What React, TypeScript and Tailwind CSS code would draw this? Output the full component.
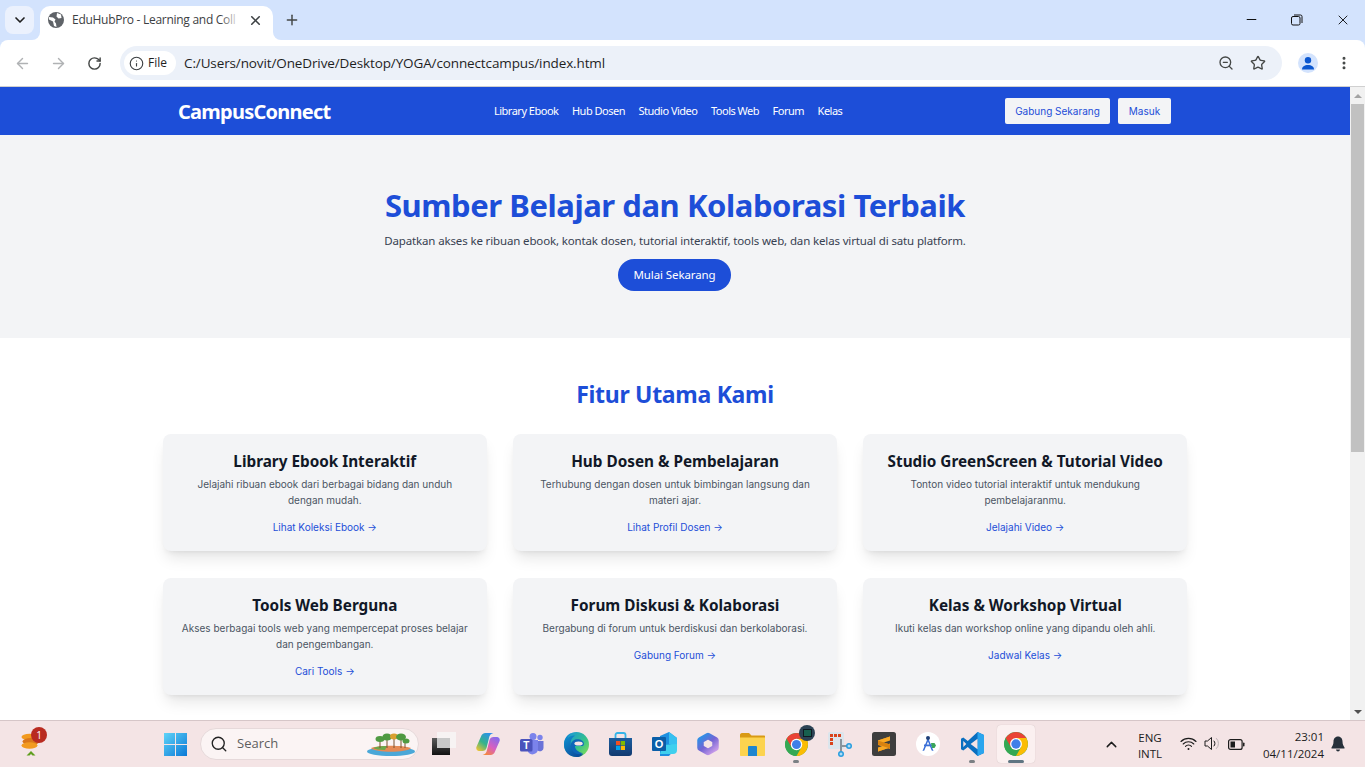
import React from "react";
import { ChevronDown, ArrowLeft, ArrowRight, RotateCw, Info, Star, Plus, X, Minus, ZoomOut, EllipsisVertical, Search, ChevronUp } from "lucide-react";

const cards = [
  { t: "Library Ebook Interaktif", d: ["Jelajahi ribuan ebook dari berbagai bidang dan unduh", "dengan mudah."], l: "Lihat Koleksi Ebook →" },
  { t: "Hub Dosen & Pembelajaran", d: ["Terhubung dengan dosen untuk bimbingan langsung dan", "materi ajar."], l: "Lihat Profil Dosen →" },
  { t: "Studio GreenScreen & Tutorial Video", d: ["Tonton video tutorial interaktif untuk mendukung", "pembelajaranmu."], l: "Jelajahi Video →" },
  { t: "Tools Web Berguna", d: ["Akses berbagai tools web yang mempercepat proses belajar", "dan pengembangan."], l: "Cari Tools →" },
  { t: "Forum Diskusi & Kolaborasi", d: ["Bergabung di forum untuk berdiskusi dan berkolaborasi."], l: "Gabung Forum →" },
  { t: "Kelas & Workshop Virtual", d: ["Ikuti kelas dan workshop online yang dipandu oleh ahli."], l: "Jadwal Kelas →" },
];
const nav = ["Library Ebook", "Hub Dosen", "Studio Video", "Tools Web", "Forum", "Kelas"];

const RED = "M43.05 13A22 22 0 0 0 4.95 13L14.47 29.5L24 13Z";
function Chrome({ s = 24 }: { s?: number }) {
  return (
    <svg width={s} height={s} viewBox="0 0 48 48">
      <circle cx="24" cy="24" r="22" fill="#34a853" />
      <path d={RED} fill="#34a853" transform="rotate(240 24 24)" />
      <path d={RED} fill="#fbbc04" transform="rotate(120 24 24)" />
      <path d={RED} fill="#ea4335" />
      <circle cx="24" cy="24" r="11" fill="#fff" />
      <circle cx="24" cy="24" r="8.7" fill="#3f7fe8" />
    </svg>
  );
}

function Slot({ children, dot }: { children: React.ReactNode; dot?: boolean }) {
  return (
    <div className="w-[44px] h-[46px] flex items-center justify-center relative">
      {children}
      {dot && <span className="absolute bottom-[4px] left-1/2 -translate-x-1/2 w-[6px] h-[3px] rounded-full bg-[#7b8084]" />}
    </div>
  );
}

function TaskIcons() {
  return (
    <div className="flex items-center">
      <Slot>
        <svg width="24" height="24" viewBox="0 0 24 24">
          <defs><linearGradient id="bk" x1="0" y1="0" x2="0" y2="1"><stop offset="0" stopColor="#5a5a5a" /><stop offset="1" stopColor="#111" /></linearGradient></defs>
          <rect x="5" y="0" width="19" height="16" fill="#f7f3f3" />
          <rect x="0" y="6" width="18" height="17" fill="url(#bk)" />
          <rect x="5" y="6" width="13" height="10" fill="#c8c8c8" />
        </svg>
      </Slot>
      <Slot>
        <svg width="24" height="24" viewBox="0 0 24 24">
          <defs>
            <linearGradient id="cp1" x1="0.1" y1="1" x2="0.8" y2="0"><stop offset="0" stopColor="#f4c430" /><stop offset=".45" stopColor="#36b38a" /><stop offset="1" stopColor="#2b8ff0" /></linearGradient>
            <linearGradient id="cp2" x1="0.9" y1="0" x2="0.2" y2="1"><stop offset="0" stopColor="#7c6cf0" /><stop offset=".55" stopColor="#d85fc0" /><stop offset="1" stopColor="#f5893a" /></linearGradient>
          </defs>
          <path d="M9.500 1h8c-3 .5-4 2.500-4.500 5l-2.500 10c-.6 2-2 3-4 3H3c-2 0-3.200-2-2.600-4L5 4.500C5.700 2.300 7.300 1 9.500 1z" fill="url(#cp1)" />
          <path d="M14.500 23h-8c3-.5 4-2.500 4.500-5l2.500-10c.6-2 2-3 4-3h3.500c2 0 3.200 2 2.600 4L19 19.500c-.7 2.200-2.300 3.500-4.500 3.500z" fill="url(#cp2)" />
        </svg>
      </Slot>
      <Slot>
        <svg width="24" height="23" viewBox="0 0 24 23">
          <circle cx="20" cy="4.500" r="2.700" fill="#7b83eb" /><circle cx="13" cy="3.500" r="3.500" fill="#7b83eb" />
          <path d="M16 8h7.500v7a3.500 3.500 0 0 1-5 3 6 6 0 0 1-2.500-2z" fill="#6a72d8" />
          <path d="M8 7h10v9a5.500 5.500 0 0 1-10 3z" fill="#7b83eb" />
          <rect x="0" y="6" width="12.500" height="12.500" rx="1.500" fill="#4b53bc" />
          <text x="6.250" y="15.800" textAnchor="middle" fontSize="10" fontWeight="700" fill="#fff" fontFamily="Liberation Sans">T</text>
        </svg>
      </Slot>
      <Slot>
        <svg width="25" height="25" viewBox="0 0 24 24">
          <defs>
            <linearGradient id="ed" x1="0.2" y1="0" x2="1" y2="0.8"><stop offset="0" stopColor="#1a9ad6" /><stop offset=".6" stopColor="#36c28a" /><stop offset="1" stopColor="#7ddc5a" /></linearGradient>
            <linearGradient id="ed2" x1="0" y1="0" x2="0.6" y2="1"><stop offset="0" stopColor="#0f9ad8" /><stop offset="1" stopColor="#0b4f9e" /></linearGradient>
          </defs>
          <circle cx="12" cy="12" r="12" fill="url(#ed)" />
          <path d="M0 12C0 5 5 0 12 0c-5 0-8 3-8.500 6 2-2 4.500-3 7-2.500C7.500 5 6 8 6.500 12c.5 5 5.500 9 12 9.500-2 1.500-4 2.500-6.500 2.500C5 24 0 19 0 12z" fill="url(#ed2)" />
          <path d="M6.500 12c.8-3.500 4-5.500 7.500-5 3 .4 5.500 2.500 5 5-.2 1-1 1.500-2.500 1.500h-6c0 3 3 6 8 7-1 .5-2 .8-3.500.8C10 21.500 6 17 6.500 12z" fill="#0d66b8" />
          <ellipse cx="14" cy="11" rx="4" ry="2" fill="#f4e3e4" />
        </svg>
      </Slot>
      <Slot>
        <svg width="23" height="24" viewBox="0 0 23 24">
          <defs><linearGradient id="st" x1="0" y1="0" x2="0" y2="1"><stop offset="0" stopColor="#1c5d9e" /><stop offset="1" stopColor="#123a70" /></linearGradient></defs>
          <path d="M6.500 6V3c0-1 .8-2 2-2h6c1.200 0 2 1 2 2v3" fill="none" stroke="#35b4e8" strokeWidth="1.800" />
          <path d="M0 6h23v15a3 3 0 0 1-3 3H3a3 3 0 0 1-3-3z" fill="url(#st)" />
          <rect x="7" y="9" width="4.200" height="4.200" fill="#f25022" /><rect x="11.800" y="9" width="4.200" height="4.200" fill="#7fba00" />
          <rect x="7" y="13.800" width="4.200" height="4.200" fill="#00a4ef" /><rect x="11.800" y="13.800" width="4.200" height="4.200" fill="#ffb900" />
        </svg>
      </Slot>
      <Slot>
        <svg width="25" height="24" viewBox="0 0 25 24">
          <path d="M8 4l9-4 8 6v9l-8 9H8z" fill="#1d8fe0" />
          <path d="M17 0l8 6v9l-8-3z" fill="#37c0f0" />
          <path d="M11 13l14-1v6a4 4 0 0 1-4 4H8z" fill="#3fd0ee" />
          <rect x="0" y="5" width="14" height="14" rx="1" fill="#0a5ea8" />
          <text x="7" y="16" textAnchor="middle" fontSize="11" fontWeight="700" fill="#fff" fontFamily="Liberation Sans">O</text>
        </svg>
      </Slot>
      <Slot>
        <svg width="22" height="24" viewBox="0 0 22 24">
          <defs><linearGradient id="m3" x1="0.1" y1="0" x2="0.9" y2="1"><stop offset="0" stopColor="#2f8fe6" /><stop offset=".5" stopColor="#7464d4" /><stop offset="1" stopColor="#c69ae8" /></linearGradient></defs>
          <path d="M11 4l7.500 4.300v7.400L11 20l-7.500-4.300V8.300z" fill="none" stroke="url(#m3)" strokeWidth="6.500" strokeLinejoin="round" />
        </svg>
      </Slot>
      <Slot>
        <svg width="25" height="23" viewBox="0 0 25 23">
          <path d="M0 2c0-1 .6-2 2-2h7l2.500 2.500H24c.6 0 1 .4 1 1V8H0z" fill="#d99a14" />
          <path d="M0 4.500h25V22c0 .6-.4 1-1 1H1c-.6 0-1-.4-1-1z" fill="#fcd34f" />
          <path d="M8 14a1 1 0 0 1 1-1h7a1 1 0 0 1 1 1v9H8z" fill="#1f86cf" />
        </svg>
      </Slot>
      <Slot dot>
        <Chrome s={25} />
        <span className="absolute top-[4px] left-[25px] w-[16px] h-[16px] rounded-full bg-[#2c4254] flex items-center justify-center">
          <span className="w-[9px] h-[8px] bg-[#17604f] border border-[#0e1a22] block" />
        </span>
      </Slot>
      <Slot>
        <svg width="25" height="25" viewBox="0 0 25 25">
          <rect x="0" y="0" width="16" height="17" rx="1.500" fill="#dbe5ec" />
          <g fill="#d9431c"><rect x="2" y="2" width="3" height="3" /><rect x="6" y="2" width="3" height="3" /><rect x="10" y="2" width="3" height="3" /><rect x="2" y="6" width="3" height="3" /><rect x="2" y="10" width="3" height="3" /></g>
          <path d="M13 7v14M13 14h8" stroke="#8a949c" strokeWidth="2" fill="none" />
          <circle cx="21" cy="14" r="3" fill="#2a9fe0" /><circle cx="13" cy="22" r="3" fill="#2a9fe0" />
          <path d="M19.500 14h3M13 20.500v3M21 12.500v3M11.500 22h3" stroke="#fff" strokeWidth="0.800" />
        </svg>
      </Slot>
      <Slot>
        <svg width="24" height="24" viewBox="0 0 24 24">
          <rect width="24" height="24" rx="2.500" fill="#3e3e3e" />
          <path d="M18 4.500L6 8.500V13l12 4V12.500L8.500 9.500 18 6.500zM6 16v3.500l12-4V12z" fill="#f59a1e" />
          <path d="M18 4.500v4L6 12.500v-4zM18 11.500v4l-12 4v-4z" fill="#f9a825" />
          <path d="M6 8.500v4l12 4v-4z" fill="#d9820f" />
        </svg>
      </Slot>
      <Slot>
        <svg width="24" height="24" viewBox="0 0 24 24">
          <circle cx="12" cy="12" r="12" fill="#fff" />
          <path d="M12 5.500L6.500 19l1.800-.6L12 9.500l3.700 8.900 1.800.6z" fill="#3a6fd8" />
          <circle cx="12" cy="6" r="2" fill="#1f3f78" />
          <rect x="8" y="12.500" width="8" height="1.800" fill="#3a6fd8" />
          <path d="M15 11h3.500l1.500 2.500-1.500 2.500H16z" fill="#3aa55a" />
        </svg>
      </Slot>
      <Slot dot>
        <svg width="24" height="24" viewBox="0 0 24 24">
          <path d="M17.500 0L24 3.100v17.800L17.500 24 7.800 15 3.300 18.400 1 17.200V6.800l2.300-1.200L7.800 9z" fill="#0a6fc0" />
          <path d="M17.500 0L24 3.100v17.800L17.500 24z" fill="#2aa5ee" />
          <path d="M17.500 6.700v10.600L10.600 12zM3.300 9v6L6.300 12z" fill="#f4e3e4" />
        </svg>
      </Slot>
      <div className="w-[38px] h-[38px] ml-[3px] flex justify-center items-center relative bg-[#fbf0f0] rounded-[4px] shadow-[0_0_1px_rgba(0,0,0,0.2)]">
        <Chrome s={26} />
        <span className="absolute bottom-0 left-1/2 -translate-x-1/2 w-[16px] h-[3px] rounded-full bg-[#5f7582]" />
      </div>
    </div>
  );
}

export default function App() {
  return (
    <div className="w-[1365px] h-[767px] overflow-hidden flex flex-col bg-white font-['Noto_Sans',sans-serif]">
      {/* tab strip */}
      <div className="h-[40px] bg-[#d3e3fd] flex items-start shrink-0">
        <div className="ml-[5px] mt-[6px] w-[29px] h-[28px] rounded-[8px] bg-[#ebf1fd] flex items-center justify-center">
          <ChevronDown size={16} strokeWidth={2.500} className="text-[#1f1f1f]" />
        </div>
        <div className="ml-[6px] mt-[6px] h-[34px] w-[233px] rounded-t-[10px] bg-white flex items-center pl-[7px] pb-[6px] relative">
          <span className="absolute -left-[8px] bottom-0 w-[8px] h-[8px] bg-white"><span className="block w-full h-full bg-[#d3e3fd] rounded-br-[8px]" /></span>
          <span className="absolute -right-[8px] bottom-0 w-[8px] h-[8px] bg-white"><span className="block w-full h-full bg-[#d3e3fd] rounded-bl-[8px]" /></span>
          <svg width="16" height="16" viewBox="0 0 16 16" className="ml-[1px] shrink-0">
            <circle cx="8" cy="8" r="8" fill="#5f6368" />
            <path d="M1 5l4 .5 2.500 2-1 2 1.500 2 .5 3.500-2.500-1-1-4.500-4-2zM9 1l4 1.500.5 3.500-3 .5-2-2z" fill="#fff" />
          </svg>
          <span className="ml-[8px] w-[168px] relative whitespace-nowrap text-[12px] leading-[16px] text-[#3c4043] font-['Open_Sans',sans-serif] tracking-[-0.280px] shrink-0">
            EduHubPro - Learning and Coll
            <span className="absolute right-0 top-0 bottom-0 w-[20px] bg-gradient-to-r from-transparent to-white" />
          </span>
          <X size={15} strokeWidth={2.500} className="ml-[8px] text-[#3c4043] shrink-0" />
        </div>
        <Plus size={16} strokeWidth={2.200} className="ml-[11px] mt-[12px] text-[#444746]" />
        <div className="flex-1" />
        <Minus size={15} strokeWidth={1.500} className="mr-[32px] mt-[12px] text-black" />
        <svg width="12" height="12" viewBox="0 0 12 12" className="mr-[32px] mt-[14px]" fill="none" stroke="#111" strokeWidth="1">
          <rect x="0.500" y="2.500" width="8.500" height="8.500" rx="1.500" /><path d="M3 1h6.500A1.500 1.500 0 0 1 11 2.500V9" />
        </svg>
        <X size={16} strokeWidth={1.300} className="mr-[14px] mt-[12px] text-black" />
      </div>
      {/* toolbar */}
      <div className="bg-[#d3e3fd] shrink-0">
        <div className="h-[47px] bg-white rounded-t-[8px] border-b border-[#d0d0d0] flex items-center relative">
          <ArrowLeft size={17} className="ml-[14px] text-[#b0b2b4]" />
          <ArrowRight size={17} className="ml-[19px] text-[#b0b2b4]" />
          <RotateCw size={15} strokeWidth={2.300} className="ml-[20px] text-[#444746]" />
          <div className="ml-[18px] mr-[83px] flex-1 h-[34px] rounded-full bg-[#ecf1f9] flex items-center pl-[4px] pr-[16px]">
            <div className="h-[24px] w-[52px] rounded-full bg-white flex items-center pl-[5px]">
              <Info size={15} strokeWidth={1.800} className="text-[#3c4043]" />
              <span className="ml-[4px] text-[12px] text-[#1f1f1f] font-['Open_Sans',sans-serif]">File</span>
            </div>
            <span className="ml-[8px] text-[13.500px] text-[#1f1f1f] font-['Open_Sans',sans-serif] tracking-[-0.120px]">C:/Users/novit/OneDrive/Desktop/YOGA/connectcampus/index.html</span>
            <div className="flex-1" />
            <ZoomOut size={16} strokeWidth={2} className="text-[#444746]" />
            <Star size={16} strokeWidth={2} className="ml-[16px] text-[#444746]" />
          </div>
          <div className="absolute right-[47px] top-[13px] w-[20px] h-[20px] rounded-full bg-[#d3e3fd] flex items-center justify-center overflow-hidden">
            <svg width="14" height="14" viewBox="0 0 14 14"><circle cx="7" cy="4.200" r="3.200" fill="#0b57d0" /><path d="M1 13.500c0-3 2.500-4.500 6-4.500s6 1.500 6 4.500z" fill="#0b57d0" /></svg>
          </div>
          <EllipsisVertical size={16} strokeWidth={2.500} className="absolute right-[13px] top-[15px] text-[#444746]" />
        </div>
      </div>
      {/* page */}
      <div className="flex-1 min-h-0 flex overflow-hidden">
        <div className="flex-1 min-w-0 overflow-hidden">
          <header className="h-[48px] bg-[#1d4ed8]">
            <div className="max-w-[992px] mx-auto h-full flex items-center justify-between relative">
              <span className="text-[20px] font-bold text-white tracking-[-0.760px] mt-[2px] ml-[-1px]">CampusConnect</span>
              <nav className="flex gap-[13.500px] absolute left-[315px] top-[16px]">
                {nav.map((n) => (
                  <a key={n} className="text-[11px] leading-[16px] text-white tracking-[-0.500px]">{n}</a>
                ))}
              </nav>
              <div className="flex gap-[8px]">
                <button className="h-[26px] w-[105px] bg-[#f3f4f6] rounded-[2px] text-[10px] text-[#1d4ed8] font-['Inter',sans-serif]">Gabung Sekarang</button>
                <button className="h-[26px] w-[53px] bg-[#f3f4f6] rounded-[2px] text-[10px] text-[#1d4ed8] font-['Inter',sans-serif]">Masuk</button>
              </div>
            </div>
          </header>
          <section className="h-[203px] bg-[#f3f4f6] flex flex-col items-center pt-[46px]">
            <h1 className="text-[31px] leading-[48px] font-bold text-[#1d4ed8] tracking-[-0.450px]">Sumber Belajar dan Kolaborasi Terbaik</h1>
            <p className="text-[11.500px] leading-[20px] text-[#374151] mt-[2px] tracking-[-0.140px]">Dapatkan akses ke ribuan ebook, kontak dosen, tutorial interaktif, tools web, dan kelas virtual di satu platform.</p>
            <button className="mt-[8px] h-[32px] w-[113px] ml-[-1px] rounded-full bg-[#1d4ed8] text-white text-[11.500px] tracking-[-0.100px]">Mulai Sekarang</button>
          </section>
          <section className="pt-[39px]">
            <h2 className="text-center text-[23px] leading-[36px] font-bold text-[#1d4ed8] tracking-[-0.300px] mt-[-1px]">Fitur Utama Kami</h2>
            <div className="mt-[22px] w-[1024px] mx-auto grid grid-cols-3 gap-x-[26.670px] gap-y-[27px]">
              {cards.map((c) => (
                <div key={c.t} className="h-[117px] bg-[#f3f4f6] rounded-[8px] shadow-lg flex flex-col items-center pt-[15px] font-['Inter',sans-serif]">
                  <h3 className="text-[15.300px] leading-[24px] font-bold text-[#111827] font-['Noto_Sans',sans-serif]">{c.t}</h3>
                  <div className="text-[10px] leading-[16px] text-[#4b5563] text-center mt-[3px]">
                    {c.d.map((x) => <div key={x}>{x}</div>)}
                  </div>
                  <a className="mt-[11px] text-[10px] leading-[16px] text-[#1d4ed8]">{c.l}</a>
                </div>
              ))}
            </div>
          </section>
        </div>
        <div className="w-[15px] bg-[#f1f1f1] flex flex-col items-center shrink-0">
          <div className="h-[17px] flex items-center justify-center"><div className="w-0 h-0 border-l-[4px] border-r-[4px] border-b-[4px] border-l-transparent border-r-transparent border-b-[#a3a3a3]" /></div>
          <div className="w-[13px] h-[348px] bg-[#c1c1c1]" />
          <div className="flex-1" />
          <div className="h-[17px] flex items-center justify-center"><div className="w-0 h-0 border-l-[4px] border-r-[4px] border-t-[4px] border-l-transparent border-r-transparent border-t-[#505050]" /></div>
        </div>
      </div>
      {/* taskbar */}
      <div className="h-[47px] shrink-0 bg-[#f4e4e5] border-t border-[#d6c6c8] flex items-center relative text-[#1c1c1c] font-['Open_Sans',sans-serif]">
        <div className="w-[164px] pl-[21px] relative h-full flex items-center shrink-0">
          <svg width="19" height="27" viewBox="0 0 19 27" className="mt-[4px]">
            <ellipse cx="8.500" cy="4" rx="8" ry="3.200" fill="#f29a1f" /><ellipse cx="10" cy="8.500" rx="8.500" ry="3.500" fill="#d9761a" /><ellipse cx="8.500" cy="12.500" rx="8" ry="3.200" fill="#f29a1f" />
            <path d="M10 18l4.500 4.500h-3L10 21l-1.500 1.500h-3z" fill="#5f9e1e" />
          </svg>
          <span className="absolute left-[31px] top-[6px] w-[16px] h-[16px] rounded-full bg-[#b92b20] text-white text-[10px] leading-[16px] text-center">1</span>
        </div>
        <svg width="23" height="23" viewBox="0 0 23 23" className="shrink-0">
          <defs><linearGradient id="wn" x1="0" y1="0" x2="1" y2="1"><stop offset="0" stopColor="#5fd4f8" /><stop offset="1" stopColor="#0a78d6" /></linearGradient></defs>
          <path d="M0 0h11v11H0zM12 0h11v11H12zM0 12h11v11H0zM12 12h11v11H12z" fill="url(#wn)" />
        </svg>
        <div className="ml-[13px] w-[219px] h-[32px] rounded-full bg-[#fbf4f4] border border-[#e6d9da] flex items-center pl-[9px] pr-[3px] shrink-0">
          <Search size={18} strokeWidth={1.800} className="text-[#222]" />
          <span className="ml-[9px] text-[13px] text-[#5e5e5e]">Search</span>
          <div className="flex-1" />
          <svg width="48" height="24" viewBox="0 0 48 24">
            <ellipse cx="24" cy="19.500" rx="24" ry="4.500" fill="#4aa8d8" />
            <path d="M4 16c8-3 32-3 40 0-4 5-36 5-40 0z" fill="#e58a55" />
            <path d="M6 16c6-2 10-2 14-2l-2 4c-6 0-10-1-12-2z" fill="#6aa84a" />
            <path d="M13 16V8M20 16V6M27 16V5M34 16V6M38 16V10" stroke="#7a5230" strokeWidth="1" />
            <g fill="#4f9a42"><ellipse cx="13" cy="7" rx="4.500" ry="3" /><ellipse cx="20" cy="5" rx="4.500" ry="3.500" /><ellipse cx="27" cy="4.500" rx="4" ry="3" fill="#d9a030" /><ellipse cx="34" cy="5" rx="5" ry="3.500" /><ellipse cx="39" cy="9" rx="3.500" ry="2.500" /></g>
          </svg>
        </div>
        <div className="ml-[3px] shrink-0"><TaskIcons /></div>
        <ChevronUp size={17} strokeWidth={2} className="absolute left-[1103px] top-[15px]" />
        <div className="absolute left-[1137px] top-[9px] text-[11.500px] leading-[16px] text-center w-[26px]">ENG<br />INTL</div>
        <svg width="17" height="14" viewBox="0 0 17 14" fill="none" stroke="#1c1c1c" strokeWidth="1.100" strokeLinecap="round" className="absolute left-[1180px] top-[16px]">
          <path d="M1 4.500a10.500 10.500 0 0 1 15 0M3.200 7a7.300 7.300 0 0 1 10.600 0M5.500 9.400a4 4 0 0 1 6 0" /><circle cx="8.500" cy="12" r="1" fill="#1c1c1c" stroke="none" />
        </svg>
        <svg width="17" height="15" viewBox="0 0 17 15" fill="none" className="absolute left-[1204px] top-[15px]">
          <path d="M1 5h2.500L7.500 1.500v12L3.500 10H1z" stroke="#1c1c1c" strokeWidth="1" strokeLinejoin="round" />
          <path d="M10 5a3.500 3.500 0 0 1 0 5" stroke="#1c1c1c" strokeWidth="1" strokeLinecap="round" />
          <path d="M12.500 2.500a7 7 0 0 1 0 10" stroke="#b8b0b2" strokeWidth="1" strokeLinecap="round" />
        </svg>
        <svg width="17" height="11" viewBox="0 0 17 11" fill="none" className="absolute left-[1228px] top-[18px]">
          <rect x="0.600" y="0.600" width="13.500" height="9.800" rx="2" stroke="#1c1c1c" strokeWidth="1.200" />
          <rect x="2.500" y="2.500" width="4.500" height="6" fill="#1c1c1c" />
          <rect x="15" y="3.500" width="1.500" height="4" rx="0.700" fill="#1c1c1c" />
        </svg>
        <div className="absolute right-[41px] top-[7px] text-[11.500px] leading-[17px] text-right">23:01<br />04/11/2024</div>
        <svg width="14" height="16" viewBox="0 0 14 16" className="absolute left-[1331px] top-[15px]">
          <path d="M7 0.500C4 .5 2.500 3 2.500 5.500c0 3-1 4.500-2 6v1h13v-1c-1-1.500-2-3-2-6C11.500 3 10 .5 7 .5z" fill="#26303a" />
          <path d="M5 13.500h4c-.2 1.200-1 2-2 2s-1.800-.8-2-2z" fill="#26303a" />
        </svg>
      </div>
    </div>
  );
}
